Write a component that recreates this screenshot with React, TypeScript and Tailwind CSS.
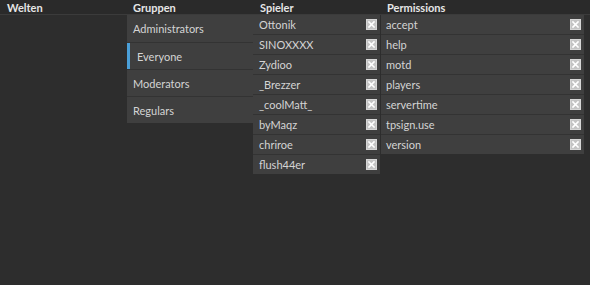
import React from "react";

const groups = ["Administrators", "Everyone", "Moderators", "Regulars"];
const players = ["Ottonik", "SINOXXXX", "Zydioo", "_Brezzer", "_coolMatt_", "byMaqz", "chriroe", "flush44er"];
const perms = ["accept", "help", "motd", "players", "servertime", "tpsign.use", "version"];

function XIcon() {
  return (
    <svg width="11" height="11" viewBox="0 0 11 11" className="shrink-0">
      <rect x="0" y="0" width="11" height="11" fill="#c4c4c4" />
      <rect x="0.5" y="0.5" width="10" height="10" fill="none" stroke="#d6d6d6" />
      <path d="M3 3 L8 8 M8 3 L3 8" stroke="#ffffff" strokeWidth="1.6" strokeLinecap="square" />
    </svg>
  );
}

export default function App() {
  return (
    <div
      className="w-[590px] h-[285px] bg-[#2d2d2d] text-[#d4d4d4] overflow-hidden"
      style={{ fontFamily: "Lato, 'Noto Sans', sans-serif" }}
    >
      <div className="flex h-[15px] border-b border-[#3b3b3b] bg-[#2a2a2a] text-[11px] font-bold text-[#e6e6e6] leading-[14px] pt-[1px]">
        <div className="w-[127px] pl-[7px]">Welten</div>
        <div className="w-[126px] pl-[6px]">Gruppen</div>
        <div className="w-[128px] pl-[7px]">Spieler</div>
        <div className="flex-1 pl-[6px]">Permissions</div>
      </div>
      <div className="flex items-start text-[11px]">
        <div className="w-[127px]" />
        <div className="w-[126px] flex flex-col gap-px bg-[#333333]">
          {groups.map((g, i) => (
            <div
              key={g}
              className={
                g === "Everyone"
                  ? "h-[26px] flex items-center bg-[#3f3f3f] border-l-[3px] border-[#4a9fd8] pl-[7px] pt-[2px]"
                  : i === 0
                  ? "h-[27px] flex items-center bg-[#3f3f3f] pl-[6px] pt-[2px]"
                  : "h-[26px] flex items-center bg-[#3f3f3f] pl-[6px] pt-[2px]"
              }
            >
              {g}
            </div>
          ))}
        </div>
        <div className="w-[127px] flex flex-col gap-px bg-[#333333]">
          {players.map((p) => (
            <div key={p} className="h-[19px] flex items-center justify-between bg-[#3f3f3f] pl-[6px] pr-[3px]">
              <span className="pt-[1px]">{p}</span>
              <XIcon />
            </div>
          ))}
        </div>
        <div className="w-[1px]" />
        <div className="w-[203px] flex flex-col gap-px bg-[#333333]">
          {perms.map((p) => (
            <div key={p} className="h-[19px] flex items-center justify-between bg-[#3f3f3f] pl-[5px] pr-[3px]">
              <span className="pt-[1px]">{p}</span>
              <XIcon />
            </div>
          ))}
        </div>
      </div>
    </div>
  );
}
